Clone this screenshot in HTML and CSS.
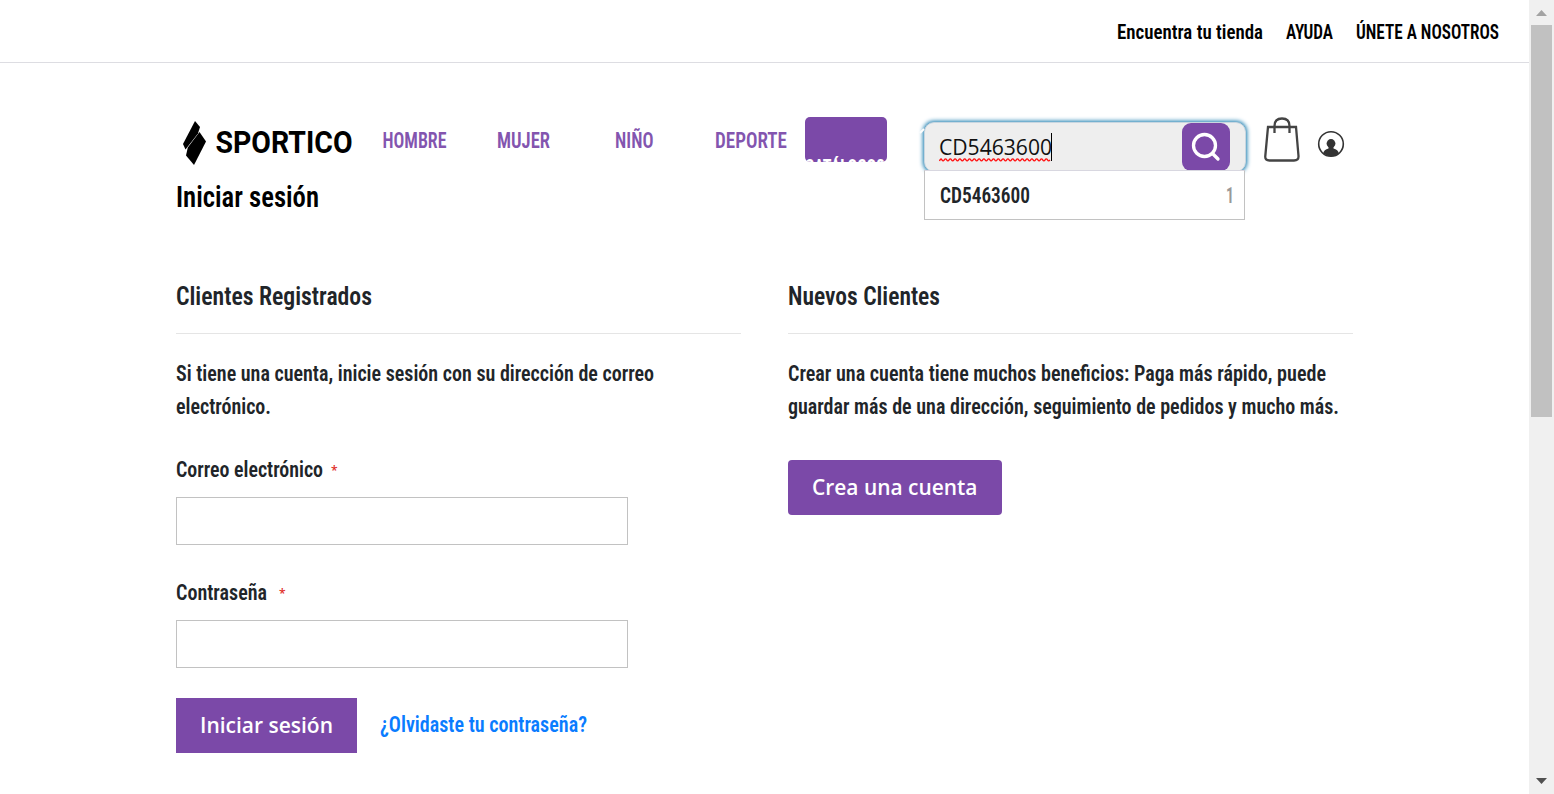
FILE: index.html
```html
<!DOCTYPE html>
<html lang="es">
<head>
<meta charset="utf-8">
<title>Iniciar sesión</title>
<link rel="stylesheet" href="styles.css">
</head>
<body>
<div class="page">
  <div class="topbar">
    <svg class="t s21" width="146" height="30"><text y="23" textLength="146" lengthAdjust="spacingAndGlyphs">Encuentra tu tienda</text></svg>
    <svg class="t s21" width="47" height="30"><text y="23" textLength="47" lengthAdjust="spacingAndGlyphs">AYUDA</text></svg>
    <svg class="t s21" width="143" height="30"><text y="23" textLength="143" lengthAdjust="spacingAndGlyphs">ÚNETE A NOSOTROS</text></svg>
  </div>
  <header class="header">
    <svg class="logo" width="171" height="46" viewBox="0 0 171 46">
      <path d="M12 1 17 7 15 13.500 2.500 29.500 0 24Z"/>
      <path d="M16.500 12 23 21.500 11 45 3 35.500 4.800 27.500Z"/>
      <text x="32.500" y="32.500" textLength="137" lengthAdjust="spacingAndGlyphs">SPORTICO</text>
    </svg>
    <nav class="nav">
      <svg class="t s22" width="64" height="30"><text x="-.5" y="22" textLength="64" lengthAdjust="spacingAndGlyphs">HOMBRE</text></svg>
      <svg class="t s22" width="53" height="30"><text y="22" textLength="53" lengthAdjust="spacingAndGlyphs">MUJER</text></svg>
      <svg class="t s22" width="38" height="30"><text y="22" textLength="38.500" lengthAdjust="spacingAndGlyphs">NIÑO</text></svg>
      <svg class="t s22" width="72" height="30"><text y="22" textLength="72" lengthAdjust="spacingAndGlyphs">DEPORTE</text></svg>
    </nav>
    <div class="catalog"><svg class="t s21" width="82" height="45"><text x="0" y="57" textLength="80" lengthAdjust="spacingAndGlyphs">CATÁLOGOS</text></svg></div>
    <div class="search">
      <div class="field">
        <svg class="query" width="240" height="46"><text x="14" y="32" textLength="113" lengthAdjust="spacingAndGlyphs">CD5463600</text><path class="wave" d="M14.500 38q1.200-3.200 2.400-1.200t2.400 0 2.400 0 2.400 0 2.400 0 2.400 0 2.400 0 2.400 0 2.400 0 2.400 0 2.400 0 2.400 0 2.400 0 2.400 0 2.400 0 2.400 0 2.400 0 2.400 0 2.400 0 2.400 0 2.400 0 2.400 0 2.400 0 2.400 0 2.400 0 2.400 0 2.400 0 2.400 0 2.400 0 2.400 0 2.400 0 2.400 0 2.400 0 2.400 0 2.400 0 2.400 0 2.400 0 2.400 0 2.400 0 2.400 0 2.400 0 2.400 0 2.400 0 2.400 0 2.400 0 2.400 0"/><path class="caret" d="M126.500 10v28"/></svg>
        <div class="go"><svg width="48" height="48" viewBox="0 0 48 48"><circle cx="22.500" cy="22.500" r="11"/><path d="m30.500 30.500 5.500 5.500"/></svg></div>
      </div>
      <div class="suggest">
        <svg class="t s22" width="90" height="30"><text y="23" textLength="90" lengthAdjust="spacingAndGlyphs">CD5463600</text></svg>
        <svg class="t s22 amount" width="7" height="30"><text y="23" textLength="8" lengthAdjust="spacingAndGlyphs">1</text></svg>
      </div>
      <svg class="tick" width="8" height="8"><path d="m1 6 4-4"/></svg>
    </div>
    <svg class="bag" width="36" height="46" viewBox="0 0 36 46"><path d="M4 10h28l2.500 29q.3 4.500-4.500 4.500H5.500Q.8 43.500 1.300 39ZM10.500 16V9q0-7.500 7.500-7.500T25.500 9v7"/></svg>
    <svg class="user" width="28" height="28" viewBox="0 0 28 28"><circle class="ring" cx="14" cy="14" r="12.300"/><circle cx="14" cy="13.500" r="4.400"/><path d="M11.500 15h5v3.500q4.500 1 5.500 5-7 5.500-16 0 1-4 5.500-5Z"/></svg>
  </header>
  <main class="main">
    <h1><svg class="t s30" width="143" height="40"><text y="30" textLength="143" lengthAdjust="spacingAndGlyphs">Iniciar sesión</text></svg></h1>
    <div class="columns">
      <section>
        <h2><svg class="t s26" width="196" height="36"><text y="27" textLength="196" lengthAdjust="spacingAndGlyphs">Clientes Registrados</text></svg></h2>
        <p class="note">
          <svg class="t s22" width="479" height="33"><text y="24" textLength="478" lengthAdjust="spacingAndGlyphs">Si tiene una cuenta, inicie sesión con su dirección de correo</text></svg>
          <svg class="t s22" width="95" height="33"><text y="24" textLength="95" lengthAdjust="spacingAndGlyphs">electrónico.</text></svg>
        </p>
        <div class="row">
          <div class="label"><svg class="t s22" width="147" height="33"><text y="23" textLength="147" lengthAdjust="spacingAndGlyphs">Correo electrónico</text></svg><span class="star">*</span></div>
          <div class="input"></div>
        </div>
        <div class="row">
          <div class="label wide"><svg class="t s22" width="91" height="33"><text y="23" textLength="91" lengthAdjust="spacingAndGlyphs">Contraseña</text></svg><span class="star">*</span></div>
          <div class="input"></div>
        </div>
        <div class="actions">
          <div class="btn login"><svg width="133" height="30"><text y="23" textLength="133" lengthAdjust="spacingAndGlyphs">Iniciar sesión</text></svg></div>
          <svg class="t s22 forgot" width="208" height="30"><text y="22" textLength="207" lengthAdjust="spacingAndGlyphs">¿Olvidaste tu contraseña?</text></svg>
        </div>
      </section>
      <section>
        <h2><svg class="t s26" width="152" height="36"><text y="27" textLength="152" lengthAdjust="spacingAndGlyphs">Nuevos Clientes</text></svg></h2>
        <p class="note">
          <svg class="t s22" width="538" height="33"><text y="24" textLength="538" lengthAdjust="spacingAndGlyphs">Crear una cuenta tiene muchos beneficios: Paga más rápido, puede</text></svg>
          <svg class="t s22" width="551" height="33"><text y="24" textLength="551" lengthAdjust="spacingAndGlyphs">guardar más de una dirección, seguimiento de pedidos y mucho más.</text></svg>
        </p>
        <div class="btn create"><svg width="166" height="30"><text y="23" textLength="165.500" lengthAdjust="spacingAndGlyphs">Crea una cuenta</text></svg></div>
      </section>
    </div>
  </main>
</div>
<div class="scrollbar">
  <svg width="25" height="25"><path class="up" d="M7 16h11l-5.500-6Z"/></svg>
  <div class="thumb"></div>
  <svg class="end" width="25" height="25"><path class="down" d="M7 9h11l-5.500 6Z"/></svg>
</div>
</body>
</html>
```
FILE: styles.css
```css
* { box-sizing: border-box; }
body {
  margin: 0;
  height: 794px;
  display: flex;
  overflow: hidden;
  background: #fff;
  color: #212529;
  font-family: "Roboto Condensed", Roboto, "Liberation Sans", sans-serif;
}
svg { display: block; flex: none; overflow: visible; }
h1, h2, p { margin: 0; }
.page { width: 1529px; flex: none; }

/* Condensed text runs */
.t text { font-weight: 570; font-stretch: 75%; fill: currentColor; }
.s21 { font-size: 21px; }
.s22 { font-size: 22px; }
.s26 { font-size: 26px; }
.s30 { font-size: 30px; }

.topbar {
  height: 63px;
  display: flex;
  justify-content: flex-end;
  gap: 23px;
  padding: 16px 30px 0 0;
  border-bottom: 1px solid #dddde2;
  color: #000;
}

.header { height: 108px; display: flex; align-items: flex-start; padding-left: 183px; }
.logo { margin-top: 57px; }
.logo text { font: bold 32px Roboto, sans-serif; }
.nav { display: flex; margin: 63px 0 0 29px; color: #8355af; }
.nav svg:nth-child(2) { margin-left: 50px; }
.nav svg:nth-child(3) { margin-left: 65px; }
.nav svg:nth-child(4) { margin-left: 62px; }
.catalog {
  width: 82px;
  height: 45px;
  margin: 54px 0 0 18px;
  border-radius: 5px;
  background: #7b49a8;
  color: #fff;
  overflow: hidden;
}
.catalog text { font-weight: 700; }

.search { position: relative; width: 322px; margin: 59px 0 0 37px; clip-path: inset(-10px -10px 0 -10px); }
.field {
  width: 322px;
  height: 50px;
  display: flex;
  justify-content: space-between;
  padding-right: 15px;
  border: 1px solid #c9d6e0;
  border-radius: 10px;
  background: #eee;
  box-shadow: 0 0 4px 1px #1279ad;
}
.query { font: 22px "Open Sans", sans-serif; }
.query text { fill: #111; }
.wave { fill: none; stroke: #f11; stroke-width: 1.3; }
.caret { stroke: #000; }
.go { width: 48px; height: 48px; border-radius: 9px; background: #7b49a8; }
.go svg { fill: none; stroke: #fff; stroke-width: 3.3; stroke-linecap: round; }
.suggest {
  position: relative;
  width: 321px;
  height: 50px;
  margin-top: -2px;
  display: flex;
  justify-content: space-between;
  padding: 9px 11px 0 15px;
  background: #fff;
  border: 1px solid #c2c2c2;
  border-top-color: #d8d7e0;
}
.amount { color: #999; }
.tick { position: absolute; left: -5px; top: 5px; stroke: #fff; stroke-width: 2; }
.bag { margin: 54px 0 0 18px; fill: none; stroke: #444; stroke-width: 2.3; }
.user { margin: 67px 0 0 17px; fill: #333; }
.user .ring { fill: none; stroke: #333; stroke-width: 1.6; }

.main { padding: 6px 176px 0; }
h1 { color: #000; }
.columns { display: grid; grid-template-columns: 565px 565px; column-gap: 47px; padding-top: 61px; }
h2 { height: 56px; border-bottom: 1px solid #e5e5e5; }
.note { padding-top: 23px; }
.row { padding-top: 31px; }
.row + .row { padding-top: 32px; }
.label { display: flex; height: 43px; gap: 8px; }
.label.wide { gap: 12px; }
.star { font: 600 12px/34px "Open Sans", sans-serif; color: #e02b27; }
.input { width: 452px; height: 48px; border: 1px solid #c2c2c2; }
.actions { display: flex; gap: 23px; padding-top: 30px; }
.forgot { margin-top: 12px; color: #0a7cff; }
.btn { height: 55px; padding: 12px 24px 0; background: #7b49a8; }
.btn text { font: 600 22px "Open Sans", sans-serif; fill: #fff; }
.login { width: 181px; }
.create { width: 214px; margin-top: 37px; border-radius: 4px; }

.scrollbar { width: 25px; flex: none; display: flex; flex-direction: column; background: #f0f0f0; }
.thumb { width: 21px; height: 392px; margin-left: 2px; background: #c1c1c1; }
.end { margin-top: auto; }
.up { fill: #a3a3a3; }
.down { fill: #505050; }
```
